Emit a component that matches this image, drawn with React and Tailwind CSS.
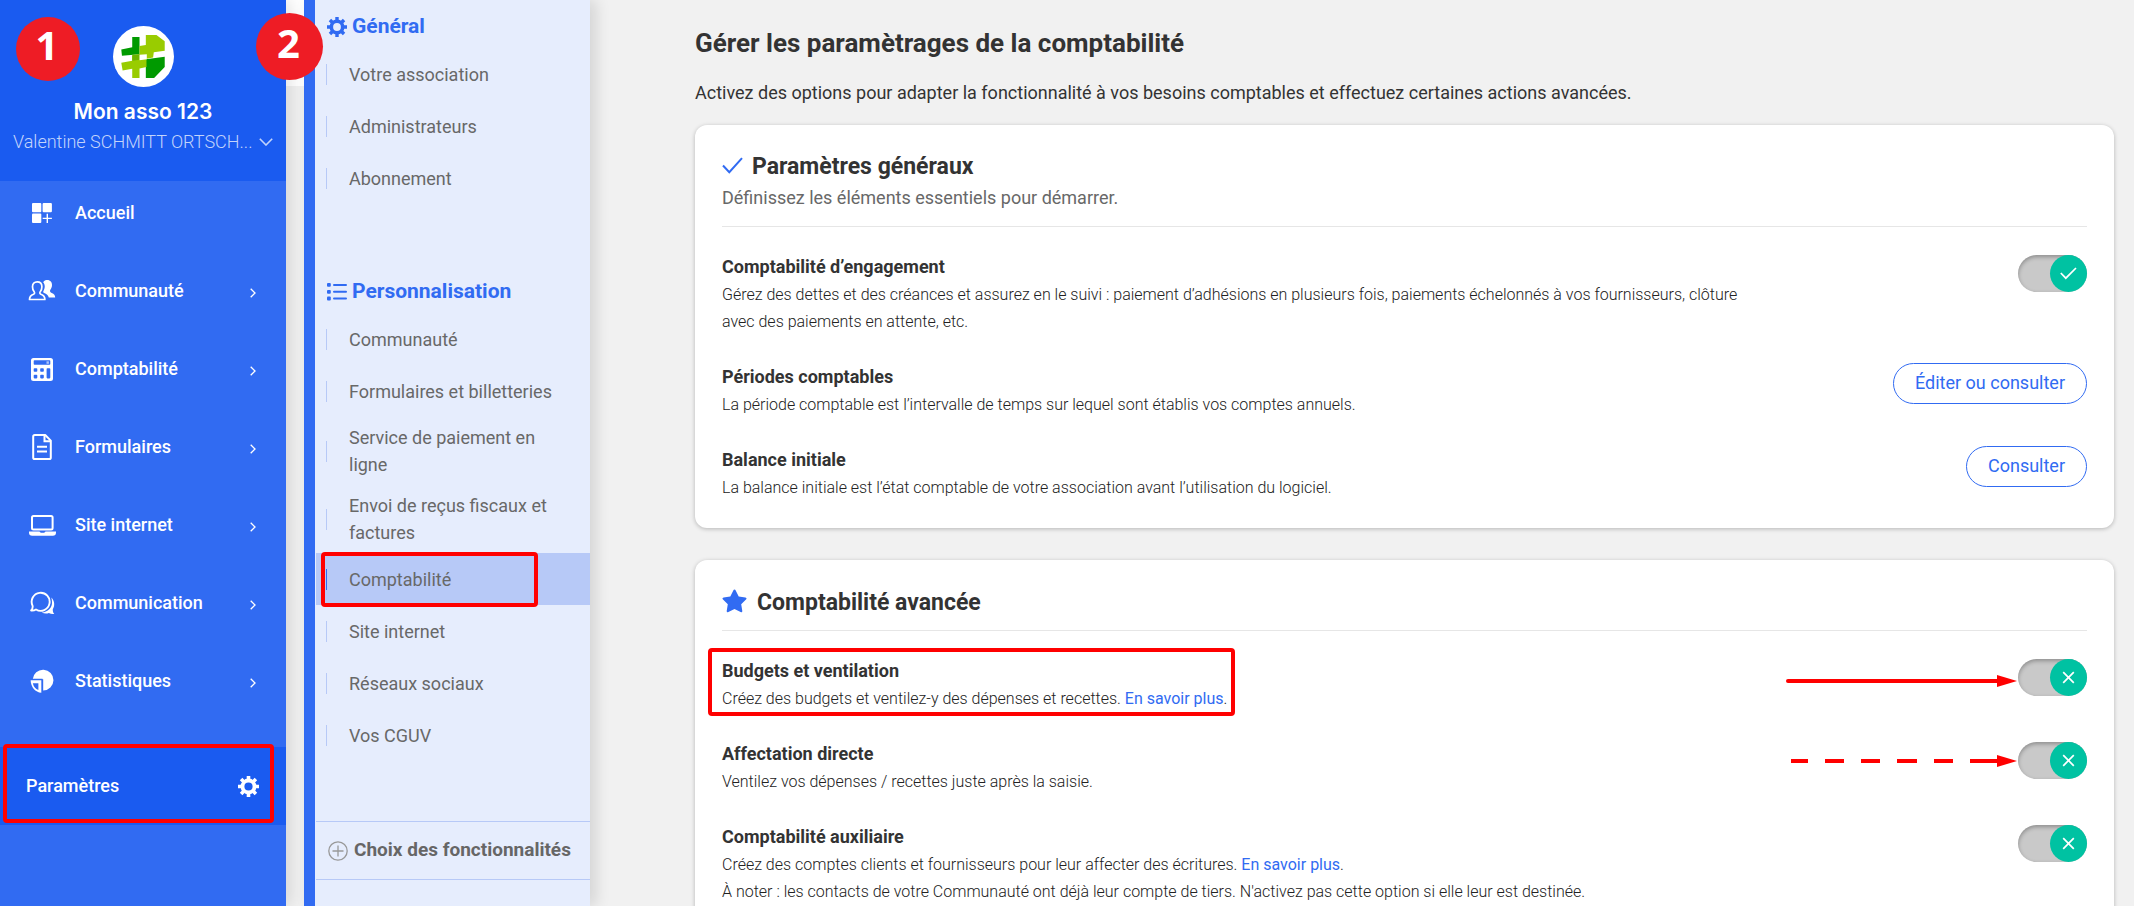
import { useState } from "react";

const menu = [
  { label: "Accueil", icon: HomeIcon, open: false },
  { label: "Communauté", icon: PeopleIcon, open: true },
  { label: "Comptabilité", icon: CalculatorIcon, open: true },
  { label: "Formulaires", icon: DocumentIcon, open: true },
  { label: "Site internet", icon: LaptopIcon, open: true },
  { label: "Communication", icon: ChatIcon, open: true },
  { label: "Statistiques", icon: PieIcon, open: true },
];

const generalLinks = ["Votre association", "Administrateurs", "Abonnement"];

const customLinks = [
  "Communauté",
  "Formulaires et billetteries",
  "Service de paiement en ligne",
  "Envoi de reçus fiscaux et factures",
  "Comptabilité",
  "Site internet",
  "Réseaux sociaux",
  "Vos CGUV",
];

function HomeIcon() {
  return (
    <svg width="20" height="20" viewBox="0 0 20 20" fill="currentColor">
      <rect width="9.3" height="9.3" rx="1" />
      <rect x="10.6" width="9.3" height="9.3" rx="1" />
      <rect y="10.6" width="9.3" height="9.3" rx="1" />
      <path d="M14.6 10.8h1.4v3.9h3.9v1.4H16V20h-1.4v-3.9h-3.9v-1.4h3.9z" />
    </svg>
  );
}

function PeopleIcon() {
  return (
    <svg width="28" height="24" viewBox="0 0 28 24" fill="none">
      <path
        d="M15.2 3.2C16 1.6 17.600 1 19.300 1c3 0 4.900 2.300 4.700 5.300-.1 2-.8 3.400-1.800 4.700-.6 1.400.2 2.400 1.600 3 2.200.9 3.400 2.100 3.400 4.500h-6.400c-.6-2.300-2.200-3.500-4.700-4.500-1.300-.6-1-1.500-.4-2.600 1.300-2.200 1.700-5.500-.5-8.200z"
        fill="currentColor"
      />
      <path
        d="M1.500 20.500c0-2.800 1.300-4.200 4-5.200 1.300-.6 1.300-1.700.5-2.900-1-1.300-1.500-2.900-1.500-4.700 0-3 1.900-4.900 4.700-4.900s4.700 1.900 4.700 4.900c0 1.800-.5 3.400-1.500 4.700-.8 1.200-.8 2.300.5 2.900 2.700 1 4 2.400 4 5.200z"
        stroke="currentColor"
        strokeWidth="1.700"
        strokeLinejoin="round"
      />
    </svg>
  );
}

function CalculatorIcon() {
  return (
    <svg width="22" height="23" viewBox="0 0 22 23" fill="currentColor">
      <path
        fillRule="evenodd"
        d="M2.500 0h17A2.500 2.500 0 0 1 22 2.500v18a2.500 2.500 0 0 1-2.500 2.500h-17A2.500 2.500 0 0 1 0 20.500v-18A2.500 2.500 0 0 1 2.500 0zM3.500 2.200Q2.700 2.200 2.700 3v3q0 .8.8.8h15q.8 0 .8-.8V3q0-.8-.8-.8zM3.500 10.200a.8.8 0 0 0-.8.8v2q0 .8.8.8h2q.8 0 .8-.8v-2q0-.8-.8-.8zM10 10.200a.8.8 0 0 0-.8.8v2q0 .8.8.8h2q.8 0 .8-.8v-2q0-.8-.8-.8zM3.500 16.800a.8.8 0 0 0-.8.8v2q0 .8.8.8h2q.8 0 .8-.8v-2q0-.8-.8-.8zM10 16.800a.8.8 0 0 0-.8.8v2q0 .8.8.8h2q.8 0 .8-.8v-2q0-.8-.8-.8zM16.400 10.200a.8.8 0 0 0-.8.8v8.600q0 .8.8.8h2.100q.8 0 .8-.8V11q0-.8-.8-.8z"
      />
      <path d="M15.500 3.300h2.400v2.500h-2.400z" opacity=".6" />
    </svg>
  );
}

function DocumentIcon() {
  return (
    <svg width="20" height="26" viewBox="0 0 20 26" fill="none" stroke="currentColor" strokeWidth="2">
      <path d="M1.200 2.600Q1.200 1 2.800 1h10.400l5.600 5.600v16.800q0 1.600-1.600 1.600H2.800q-1.600 0-1.600-1.600z" strokeLinejoin="round" />
      <path d="M12.500 1.500v5.700h6M5 12.800h10M5 17.400h10" />
    </svg>
  );
}

function LaptopIcon() {
  return (
    <svg width="27" height="21" viewBox="0 0 27 21" fill="none">
      <rect x="3" y="1" width="20.600" height="13.500" rx="1.500" stroke="currentColor" strokeWidth="2" />
      <path d="M0 16.600h10.500q.5 1.100 1.500 1.100h3q1 0 1.500-1.100H27v1q0 3.200-3.200 3.200H3.200Q0 20.800 0 17.600z" fill="currentColor" />
    </svg>
  );
}

function ChatIcon() {
  return (
    <svg width="25" height="24" viewBox="0 0 25 24" fill="none">
      <path
        d="M2.600 14.800A9 9 0 1 1 6 18.500c-1.600 1-3 1.200-4.900 1 1.500-1.400 1.800-2.800 1.500-4.700z"
        stroke="currentColor"
        strokeWidth="1.900"
        strokeLinejoin="round"
      />
      <path
        d="M21.300 6.500c3.400 3.400 3.700 8.300 1.500 11.700-.1 2 .3 3.500 1.500 4.800-2.200.3-3.700 0-5.400-1-2.500.9-5 .6-7.200-.6 6 0 10.800-4.600 10.300-10.600-.1-1.600-.3-2.900-.7-4.300z"
        fill="currentColor"
      />
    </svg>
  );
}

function PieIcon() {
  return (
    <svg width="24" height="25" viewBox="0 0 24 25" fill="none">
      <path d="M2.700 10.200A10.400 10.400 0 1 1 13.200 21.500V10.200z" fill="currentColor" />
      <path d="M0 9.700h12.500v14.600C5.500 24 .5 19 0 9.700z" fill="#316bf2" />
      <path d="M.6 11.200h10.700v12.600C5.300 23.200.9 18.200.6 11.200z" fill="currentColor" />
      <path d="M2.800 14.200h5.600v6.900q-4.400-1.700-5.600-6.900z" fill="#316bf2" />
    </svg>
  );
}

function GearIcon({ size }) {
  return (
    <svg width={size} height={size} viewBox="0 0 21 21" fill="none" stroke="currentColor">
      <circle cx="10.500" cy="10.500" r="6" strokeWidth="3.800" />
      <g strokeWidth="3.600">
        <path d="M10.500 0v4M10.500 17v4M0 10.500h4M17 10.500h4M3.100 3.100l2.600 2.600M15.300 15.300l2.600 2.600M17.900 3.100l-2.600 2.600M5.700 15.300l-2.600 2.600" />
      </g>
    </svg>
  );
}

function ListIcon() {
  return (
    <svg width="20" height="18" viewBox="0 0 20 18" fill="currentColor">
      <rect width="3.800" height="3.800" rx="1" />
      <rect y="6.900" width="3.800" height="3.800" rx="1" />
      <rect y="13.600" width="3.800" height="3.800" rx="1" />
      <rect x="6" y="1" width="14" height="2" rx="1" />
      <rect x="6" y="7.800" width="14" height="2" rx="1" />
      <rect x="6" y="14.600" width="14" height="2" rx="1" />
    </svg>
  );
}

function Logo() {
  return (
    <svg width="61" height="61" viewBox="339 78 184 184">
      <circle cx="431" cy="170" r="92" fill="#fff" />
      <path fill="#009a00" d="M364 149l33-7v-31h22v52l-53 5zM438 178l57-7v31l-32 33h-25z" />
      <path
        fill="#9c0"
        d="M419 138l19-3v-30h32l25 19v29l-33 4-2 16-20 4v25l-21 4v29h-22v-28l-29 5-4-23 33-6v-15l22-5z"
      />
      <path fill="#6cb300" d="M397 165l22-2v17l-22 3z" />
      <path fill="#fff" d="M419 165l22-2v15l-22 3z" />
    </svg>
  );
}

function StepBadge({ number, className }) {
  return (
    <span
      className={`absolute z-20 flex items-center justify-center rounded-full bg-[#ee1c25] pr-0.5 pb-2 font-['Open_Sans',sans-serif] text-[40px] leading-none font-bold text-white ${className}`}
    >
      {number}
    </span>
  );
}

function SubLink({ label, active }) {
  return (
    <li>
      <a
        href="#"
        className={`ml-px flex min-h-[52px] items-center py-[7px] pr-6 pl-[10px] text-lg leading-[27px] text-[#686868] ${active ? "relative bg-[#b7c9f7]" : ""}`}
      >
        <span className={`mr-[22px] h-[21px] w-px shrink-0 ${active ? "bg-[#316bf2]" : "bg-[#b7c9f7]"}`} />
        {label}
        {active && (
          <span className="absolute top-[-1px] bottom-[-2px] left-[5px] w-[217px] rounded-sm border-4 border-[#ff0000]" />
        )}
      </a>
    </li>
  );
}

function Toggle({ id, icon, arrow }) {
  const [checked, setChecked] = useState(icon === "check");

  return (
    <div className="relative mt-[2px] h-[37px] w-[69px] shrink-0">
      {arrow && (
        <svg
          width="232"
          height="14"
          viewBox="0 0 232 14"
          className={`absolute right-full ${arrow === "solid" ? "top-[15px]" : "top-[12px]"}`}
        >
          {arrow === "solid" ? (
            <path d="M2 7h210" stroke="#f00" strokeWidth="4" strokeLinecap="round" />
          ) : (
            <path d="M5 7h17M39 7h19M75 7h19M111 7h20M148 7h19M184 7h28" stroke="#f00" strokeWidth="4" />
          )}
          <path d="M211 1l20 6-20 6z" fill="#f00" />
        </svg>
      )}
      <input
        id={id}
        type="checkbox"
        checked={checked}
        onChange={(e) => setChecked(e.target.checked)}
        className="block h-full w-full appearance-none rounded-full bg-[#c9c9c9] shadow-[inset_0_2px_4px_rgba(0,0,0,0.3)]"
      />
      <span className="pointer-events-none absolute top-0 right-0 flex size-[37px] items-center justify-center rounded-full bg-[#00c2a2]">
        <svg width="17" height="13" viewBox="0 0 17 13" fill="none" stroke="#fff" strokeWidth="1.700">
          {checked ? <path d="M.8 6l5 5.200L16 1" /> : <path d="M3.200 1.200l10.600 10.600M13.800 1.200L3.200 11.800" />}
        </svg>
      </span>
    </div>
  );
}

function SettingRow({ title, htmlFor, framed, children, action }) {
  return (
    <div className="flex items-start justify-between">
      <div className="relative w-3/4">
        <h3 className="text-lg leading-[27px] font-bold">
          {htmlFor ? <label htmlFor={htmlFor}>{title}</label> : title}
        </h3>
        <p className="mt-px text-base leading-[27px] font-light text-[#222]">{children}</p>
        {framed && (
          <span className="pointer-events-none absolute top-[-9px] bottom-[-4px] left-[-14px] w-[527px] rounded-sm border-4 border-[#ff0000]" />
        )}
      </div>
      {action}
    </div>
  );
}

function OutlineButton({ children }) {
  return (
    <button className="h-[41px] shrink-0 rounded-full border border-[#316bf2] px-[21px] pb-0.5 text-lg leading-[27px] text-[#316bf2]">
      {children}
    </button>
  );
}

function Card({ children }) {
  return (
    <section className="rounded-xl bg-white px-[27px] shadow-[0_1px_4px_rgba(0,0,0,0.25)]">
      {children}
    </section>
  );
}

export default function App() {
  return (
    <div className="relative flex h-screen overflow-hidden bg-[#f1f1f1] font-[Roboto,sans-serif] text-[#333]">
      <StepBadge number="1" className="top-[17px] left-4 size-16" />
      <StepBadge number="2" className="top-[13px] left-64 size-[67px]" />

      {/* Main menu */}
      <aside className="relative z-10 w-[286px] shrink-0 bg-[#316bf2] text-white shadow-[4px_0_16px_rgba(0,0,0,0.12)]">
        <div className="flex h-[181px] flex-col items-center bg-[#1a5bf0] pt-[26px]">
          <Logo />
          <h2 className="mt-[9px] font-[Inter,sans-serif] text-[21px] leading-8 font-semibold">Mon asso 123</h2>
          <button className="flex w-full items-center justify-between px-[13px] text-lg leading-7 font-light text-[#c3d4fb]">
            Valentine SCHMITT ORTSCH...
            <svg width="14" height="8" viewBox="0 0 14 8" fill="none" stroke="currentColor" strokeWidth="1.600">
              <path d="M.8.800L7 7 13.200.800" />
            </svg>
          </button>
        </div>
        <nav className="flex flex-col gap-7 pt-[7px]">
          {menu.map(({ label, icon: Icon, open }) => (
            <a key={label} href="#" className="flex h-[50px] items-center pr-[30px] pl-7 text-lg font-medium">
              <span className="mr-[19px] flex w-7 justify-center">
                <Icon />
              </span>
              <span className="flex-1">{label}</span>
              {open && (
                <svg width="6" height="10" viewBox="0 0 6 10" fill="none" stroke="currentColor" strokeWidth="1.300" className="mt-[3px]">
                  <path d="M.7.700L5 5 .7 9.300" />
                </svg>
              )}
            </a>
          ))}
        </nav>
        <a
          href="#"
          className="relative mt-[41px] flex h-[78px] items-center justify-between bg-[#1a5bf0] pr-[27px] pl-[26px] text-lg font-medium"
        >
          Paramètres
          <GearIcon size={21} />
          <span className="absolute top-[-3px] bottom-[2px] left-[3px] w-[271px] rounded-sm border-4 border-[#ff0000]" />
        </a>
      </aside>

      <div className="w-[18px] shrink-0">
        <div className="h-[86px] bg-white" />
      </div>

      {/* Settings menu */}
      <aside className="w-[286px] shrink-0 border-l-[11px] border-[#316bf2] bg-[#e6edfd] pt-[9px] shadow-[6px_0_14px_rgba(0,0,0,0.12)]">
        <h2 className="flex h-9 items-center gap-[5px] pl-3 text-[21px] font-bold text-[#316bf2]">
          <GearIcon size={20} />
          Général
        </h2>
        <ul className="mt-[3px]">
          {generalLinks.map((label) => (
            <SubLink key={label} label={label} />
          ))}
        </ul>
        <h2 className="mt-[70px] flex h-9 items-center gap-[5px] pl-3 text-[21px] font-bold text-[#316bf2]">
          <ListIcon />
          Personnalisation
        </h2>
        <ul className="mt-[3px]">
          {customLinks.map((label) => (
            <SubLink key={label} label={label} active={label === "Comptabilité"} />
          ))}
        </ul>
        <a
          href="#"
          className="mt-[60px] ml-px flex h-[59px] items-center gap-[6px] border-y border-[#b7c9f7] pl-3 text-[19px] font-bold text-[#666]"
        >
          <svg width="20" height="20" viewBox="0 0 20 20" fill="none" stroke="#999" strokeWidth="1.300">
            <circle cx="10" cy="10" r="9.200" />
            <path d="M10 4.500v11M4.500 10h11" />
          </svg>
          Choix des fonctionnalités
        </a>
      </aside>

      <main className="min-w-0 flex-1 pt-[25px] pr-5 pl-[105px]">
        <h1 className="text-[26px] leading-9 font-bold">Gérer les paramètrages de la comptabilité</h1>
        <p className="mt-[18px] text-lg leading-7">
          Activez des options pour adapter la fonctionnalité à vos besoins comptables et effectuez certaines actions
          avancées.
        </p>

        <div className="mt-[18px] flex flex-col gap-8">
          <Card>
            <header className="border-b border-[#e6e6e6] pt-[26px] pb-[14px]">
              <h2 className="flex items-center gap-[9px] text-[23px] leading-8 font-bold">
                <svg width="21" height="17" viewBox="0 0 21 17" fill="none" stroke="#316bf2" strokeWidth="2" className="mb-1">
                  <path d="M1 8.500l6.300 6.700L20 1.200" />
                </svg>
                Paramètres généraux
              </h2>
              <p className="mt-px text-lg leading-7 text-[#686868]">
                Définissez les éléments essentiels pour démarrer.
              </p>
            </header>
            <div className="flex flex-col gap-7 pt-[26px] pb-[27px]">
              <SettingRow
                title="Comptabilité d’engagement"
                htmlFor="engagement"
                action={<Toggle id="engagement" icon="check" />}
              >
                Gérez des dettes et des créances et assurez en le suivi : paiement d’adhésions en plusieurs fois,
                paiements échelonnés à vos fournisseurs, clôture avec des paiements en attente, etc.
              </SettingRow>
              <SettingRow title="Périodes comptables" action={<OutlineButton>Éditer ou consulter</OutlineButton>}>
                La période comptable est l’intervalle de temps sur lequel sont établis vos comptes annuels.
              </SettingRow>
              <SettingRow title="Balance initiale" action={<OutlineButton>Consulter</OutlineButton>}>
                La balance initiale est l’état comptable de votre association avant l’utilisation du logiciel.
              </SettingRow>
            </div>
          </Card>

          <Card>
            <header className="border-b border-[#e6e6e6] pt-[27px] pb-[11px]">
              <h2 className="flex items-center gap-[10px] text-[23px] leading-8 font-bold">
                <svg width="25" height="24" viewBox="0 0 25 24" fill="#316bf2" className="mb-1">
                  <path d="M12.500.5q.8 0 1.200.9l3 6.100 6.700 1q1.900.5.6 2l-4.800 4.700 1.100 6.700q.1 1.900-1.700 1.200l-6.100-3.200-6.100 3.200q-1.800.7-1.700-1.200l1.100-6.700L1 10.500q-1.300-1.500.6-2l6.700-1 3-6.100q.4-.9 1.200-.9z" />
                </svg>
                Comptabilité avancée
              </h2>
            </header>
            <div className="flex flex-col gap-7 pt-[26px] pb-[27px]">
              <SettingRow
                title="Budgets et ventilation"
                htmlFor="budgets"
                framed
                action={<Toggle id="budgets" icon="cross" arrow="solid" />}
              >
                Créez des budgets et ventilez-y des dépenses et recettes.{" "}
                <a href="#" className="font-normal text-[#316bf2]">
                  En savoir plus
                </a>
                .
              </SettingRow>
              <SettingRow
                title="Affectation directe"
                htmlFor="affectation"
                action={<Toggle id="affectation" icon="cross" arrow="dashed" />}
              >
                Ventilez vos dépenses / recettes juste après la saisie.
              </SettingRow>
              <SettingRow
                title="Comptabilité auxiliaire"
                htmlFor="auxiliaire"
                action={<Toggle id="auxiliaire" icon="cross" />}
              >
                Créez des comptes clients et fournisseurs pour leur affecter des écritures.{" "}
                <a href="#" className="font-normal text-[#316bf2]">
                  En savoir plus
                </a>
                .
                <br />À noter : les contacts de votre Communauté ont déjà leur compte de tiers. N'activez pas cette
                option si elle leur est destinée.
              </SettingRow>
            </div>
          </Card>
        </div>
      </main>
    </div>
  );
}
